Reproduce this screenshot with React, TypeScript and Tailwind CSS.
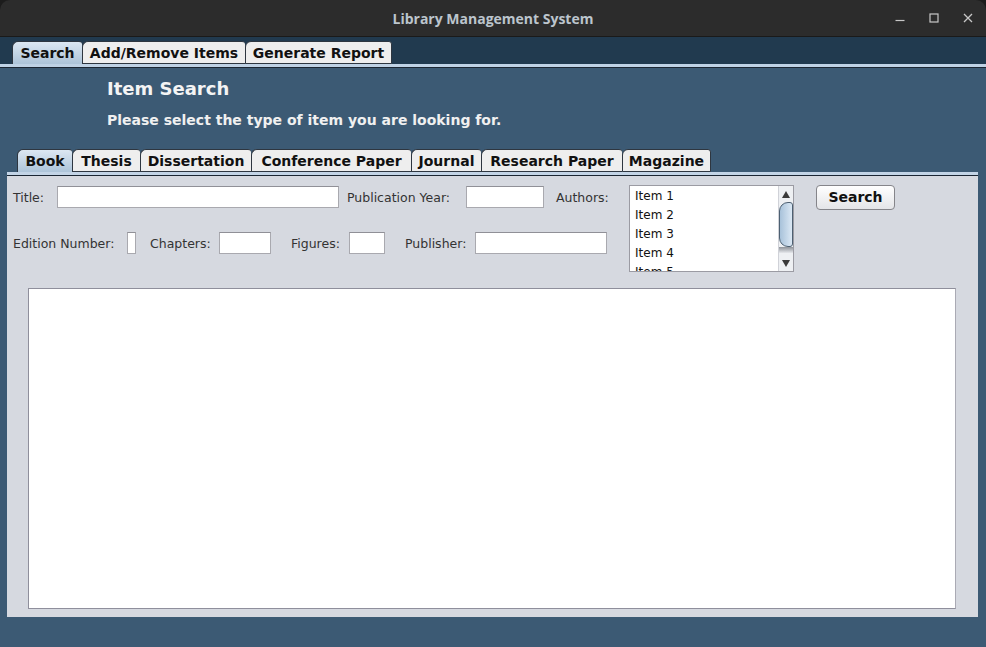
import React from 'react';
import clsx from 'clsx';

const mainTabs = [
  { label: 'Search', w: 'w-[70px]', selected: true },
  { label: 'Add/Remove Items', w: 'w-[163px]' },
  { label: 'Generate Report', w: 'w-[147px]', last: true },
];

const itemTabs = [
  { label: 'Book', w: 'w-[55px]', selected: true },
  { label: 'Thesis', w: 'w-[68px]' },
  { label: 'Dissertation', w: 'w-[111px]' },
  { label: 'Conference Paper', w: 'w-[160px]' },
  { label: 'Journal', w: 'w-[70px]' },
  { label: 'Research Paper', w: 'w-[141px]' },
  { label: 'Magazine', w: 'w-[89px]', last: true },
];

type TabProps = { label: string; w: string; selected?: boolean; last?: boolean };

function Tab({ label, w, selected, last }: TabProps) {
  return (
    <div
      className={clsx(
        'flex h-[23px] items-center justify-center rounded-tl-[6px] rounded-tr-[3px] border-l border-t border-[#2e3640] pt-[1px] text-[14px] font-bold text-[#111]',
        w,
        last && 'border-r',
        selected ? 'bg-gradient-to-b from-[#dce7f2] to-[#adc4d9]' : 'border-b bg-[#eeeeee]',
      )}
    >
      {label}
    </div>
  );
}

function Field({ w }: { w: string }) {
  return <div className={clsx('h-[22px] border border-[#a9a9af] border-t-[#909097] bg-white', w)} />;
}

function Label({ text, cls }: { text: string; cls: string }) {
  return <div className={clsx('whitespace-nowrap pt-[2px] text-[12.5px] text-[#333]', cls)}>{text}</div>;
}

const authors = ['Item 1', 'Item 2', 'Item 3', 'Item 4', 'Item 5'];

export default function App() {
  return (
    <div className="flex h-[647px] w-[986px] flex-col overflow-hidden bg-[#1c1c1c] font-['DejaVu_Sans',sans-serif]">
      {/* window title bar */}
      <div className="grid h-[37px] shrink-0 grid-cols-[1fr_auto_1fr] items-center rounded-t-[10px] border-b border-[#1a1a1a] bg-[#2c2c2c]">
        <div />
        <div className="font-['Open_Sans',sans-serif] text-[14px] font-bold text-[#bcc5cd]">Library Management System</div>
        <div className="flex items-center justify-end gap-[24px] pr-[13px]">
          <svg width="10" height="10" viewBox="0 0 10 10">
            <line x1="0.5" y1="7.5" x2="9.5" y2="7.5" stroke="#c8c8c8" strokeWidth="1.2" />
          </svg>
          <svg width="10" height="10" viewBox="0 0 10 10">
            <rect x="1" y="1" width="8" height="8" fill="none" stroke="#c8c8c8" strokeWidth="1.2" />
          </svg>
          <svg width="10" height="10" viewBox="0 0 10 10">
            <path d="M1 1 L9 9 M9 1 L1 9" stroke="#c8c8c8" strokeWidth="1.3" />
          </svg>
        </div>
      </div>

      {/* main tabs */}
      <div className="flex h-[27px] shrink-0 items-end bg-[#213a4f] pl-[12px]">
        {mainTabs.map((t) => (
          <Tab key={t.label} {...t} />
        ))}
      </div>
      <div className="h-[3px] shrink-0 bg-[#bfd2e5]" />
      <div className="h-px shrink-0 bg-[#1b2633]" />

      {/* search tab content */}
      <div className="flex flex-1 flex-col bg-[#3c5a74] pl-[7px] pr-[8px]">
        <div className="ml-[100px] mt-[10px] text-[18px] font-bold leading-[22px] text-[#f4f4f4]">Item Search</div>
        <div className="ml-[100px] mt-[11px] text-[14px] font-bold leading-[18px] text-[#f0f0f0]">
          Please select the type of item you are looking for.
        </div>

        <div className="mt-[20px] flex h-[23px] items-end pl-[10px]">
          {itemTabs.map((t) => (
            <Tab key={t.label} {...t} />
          ))}
        </div>
        <div className="h-[3px] bg-[#c3d4e6]" />
        <div className="h-px bg-[#1b2633]" />

        <div className="flex h-[441px] flex-col bg-[#d6d9e0]">
          <div className="flex h-[112px] items-start pl-[6px]">
            <div className="flex w-[616px] flex-col">
              <div className="mt-[10px] flex h-[22px] items-center">
                <Label text="Title:" cls="w-[44px]" />
                <Field w="w-[282px]" />
                <Label text="Publication Year:" cls="ml-[8px] w-[119px]" />
                <Field w="w-[78px]" />
                <Label text="Authors:" cls="ml-[12px]" />
              </div>
              <div className="mt-[24px] flex h-[22px] items-center">
                <Label text="Edition Number:" cls="w-[114px]" />
                <Field w="w-[9px]" />
                <Label text="Chapters:" cls="ml-[14px] w-[69px]" />
                <Field w="w-[52px]" />
                <Label text="Figures:" cls="ml-[20px] w-[58px]" />
                <Field w="w-[36px]" />
                <Label text="Publisher:" cls="ml-[20px] w-[70px]" />
                <Field w="w-[132px]" />
              </div>
            </div>

            {/* authors list */}
            <div className="mt-[9px] flex h-[87px] w-[165px] border border-[#9b9ba3] bg-white">
              <div className="flex-1 overflow-hidden pl-[5px] pt-[1px] text-[12px] leading-[19px] text-[#111]">
                {authors.map((a) => (
                  <div key={a}>{a}</div>
                ))}
              </div>
              <div className="flex w-[15px] flex-col border-l border-[#d0d2d8] bg-[#eef0f3]">
                <div className="flex h-[16px] items-center justify-center">
                  <svg width="8" height="7" viewBox="0 0 8 7">
                    <polygon points="4,0 8,7 0,7" fill="#3a3a3a" />
                  </svg>
                </div>
                <div className="h-[45px] rounded-l-[9px] rounded-r-[3px] border border-[#4d6072] bg-gradient-to-r from-[#a8c2da] to-[#dbe8f4]" />
                <div className="h-[6px] bg-gradient-to-b from-[#8f9399] to-[#e6e8ec]" />
                <div className="flex-1" />
                <div className="flex h-[16px] items-center justify-center">
                  <svg width="8" height="7" viewBox="0 0 8 7">
                    <polygon points="0,0 8,0 4,7" fill="#3a3a3a" />
                  </svg>
                </div>
              </div>
            </div>

            <div className="ml-[22px] mt-[9px] flex h-[25px] w-[79px] items-center justify-center rounded-[4px] border border-[#85858a] bg-gradient-to-b from-white to-[#e4e5e8] text-[14px] font-bold text-[#111]">
              Search
            </div>
          </div>

          <div className="ml-[21px] mr-[22px] h-[321px] border border-[#8f8f9c] border-r-[#aaaab4] bg-white" />
        </div>
      </div>
    </div>
  );
}
